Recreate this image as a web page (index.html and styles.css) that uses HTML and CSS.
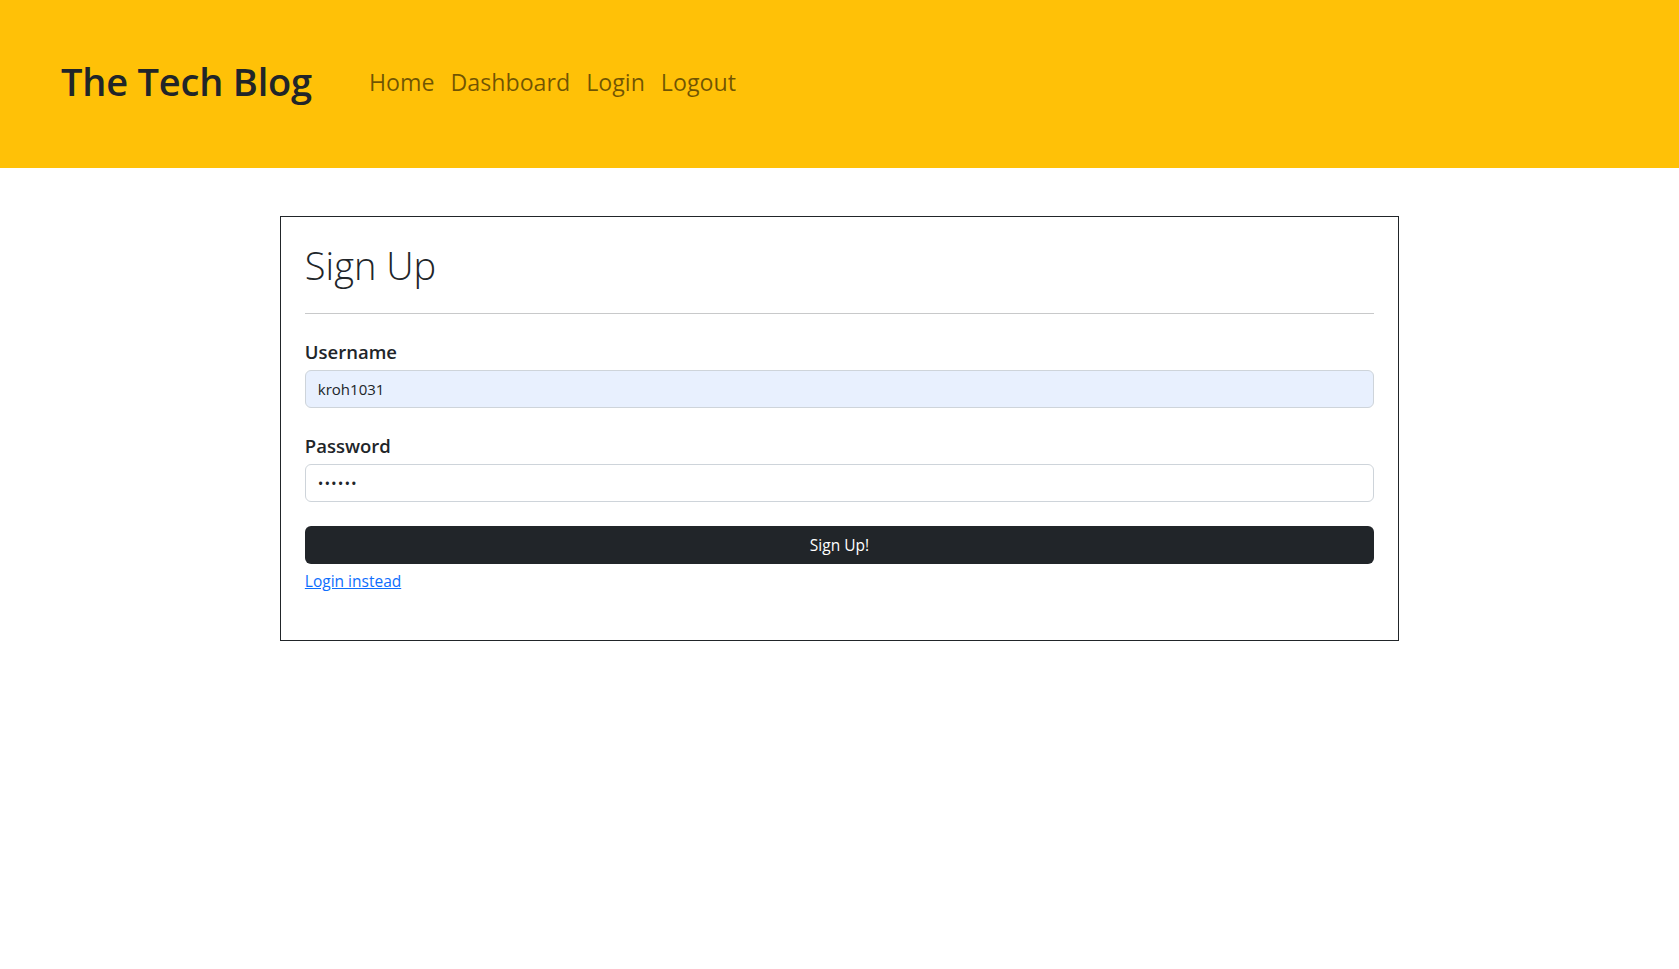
FILE: index.html
```html
<!DOCTYPE html>
<html lang="en">
<head>
<meta charset="utf-8">
<title>The Tech Blog</title>
<link rel="stylesheet" href="styles.css">
</head>
<body>
<header class="site-header">
  <a class="brand" href="#">The Tech Blog</a>
  <nav class="nav">
    <a class="nav-link" href="#">Home</a>
    <a class="nav-link" href="#">Dashboard</a>
    <a class="nav-link" href="#">Login</a>
    <a class="nav-link" href="#">Logout</a>
  </nav>
</header>
<main class="page">
  <section class="card">
    <h1 class="card-title">Sign Up</h1>
    <hr class="divider">
    <form class="form">
      <div class="field">
        <label class="field-label" for="username">Username</label>
        <input class="field-input autofilled" id="username" type="text" value="kroh1031">
      </div>
      <div class="field">
        <label class="field-label" for="password">Password</label>
        <input class="field-input password" id="password" type="password" value="123456">
      </div>
      <button class="submit" type="button">Sign Up!</button>
    </form>
    <a class="alt-link" href="#">Login instead</a>
  </section>
</main>
</body>
</html>
```

FILE: styles.css
```css
* { box-sizing: border-box; }

body {
  margin: 0;
  font-family: "Open Sans", "Noto Sans", "Liberation Sans", sans-serif;
  font-size: 16px;
  line-height: 1.5;
  color: #212529;
  background: #fff;
}

.site-header {
  height: 168px;
  background: #ffc107;
  display: flex;
  align-items: center;
  padding: 0 0 4px 61px;
}

.brand {
  font-size: 38px;
  font-weight: 600;
  line-height: 1.2;
  color: #212529;
  text-decoration: none;
  margin-right: 49px;
  letter-spacing: -0.2px;
}

.nav {
  display: flex;
  align-items: center;
}

.nav-link {
  font-size: 23.2px;
  line-height: 1.5;
  color: rgba(0, 0, 0, 0.56);
  text-decoration: none;
  padding: 0 8px;
}

.page {
  padding-top: 48px;
}

.card {
  width: 66.667%;
  margin: 0 auto;
  border: 1px solid #212529;
  padding: 24px 24px 47px;
}

.card-title {
  margin: 0;
  font-size: 38px;
  font-weight: 300;
  line-height: 48px;
  height: 48px;
}

.divider {
  margin: 24px 0 20px;
  border: 0;
  border-top: 1px solid #c8c9ca;
}

.form { margin: 0; }

.field { margin-bottom: 20px; }

.field-label {
  display: block;
  font-size: 18.5px;
  font-weight: 600;
  line-height: 30px;
  padding-top: 3px;
  margin-bottom: 3px;
}

.field-input {
  display: block;
  width: 100%;
  height: 38px;
  padding: 6px 12px;
  font-family: inherit;
  font-size: 15px;
  color: #212529;
  background: #fff;
  border: 1px solid #ced4da;
  border-radius: 6px;
  outline: none;
}

.field-input.autofilled {
  background: #e8f0fe;
}

.field-input.password {
  letter-spacing: 1px;
}

.submit {
  display: block;
  width: 100%;
  height: 38px;
  margin-top: 24px;
  font-family: inherit;
  font-size: 15.5px;
  color: #fff;
  background: #212529;
  border: 0;
  border-radius: 6px;
}

.alt-link {
  display: inline-block;
  margin-top: 6px;
  font-size: 15.5px;
  color: #0d6efd;
  text-decoration: underline;
}
```
